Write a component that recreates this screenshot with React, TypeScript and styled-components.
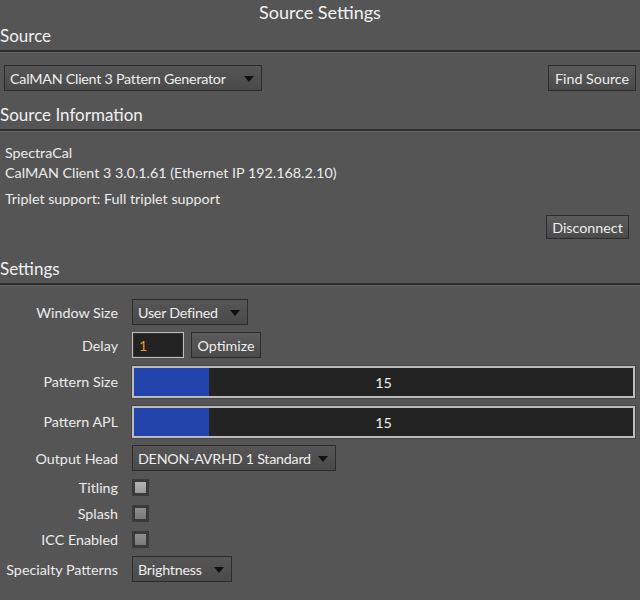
import React, { FC } from 'react';
import styled, { createGlobalStyle } from 'styled-components';

const GlobalStyle = createGlobalStyle`
  html, body {
    margin: 0;
    padding: 0;
    background: #555555;
  }
  body {
    font-family: Lato, "Open Sans", sans-serif;
    color: #ececec;
  }
`;

const Page = styled.div`
  width: 640px;
  height: 600px;
  background: #555555;
  overflow: hidden;
  font-size: 14.3px;
`;

const Title = styled.div`
  height: 24px;
  padding-bottom: 2px;
  line-height: 24px;
  text-align: center;
  font-size: 18px;
  color: #f2f2f2;
`;

const SectionHeader = styled.div<{ top?: number }>`
  margin-top: ${(p) => p.top ?? 0}px;
  height: 20px;
  line-height: 20px;
  padding-bottom: 4px;
  font-size: 17px;
  color: #f0f0f0;
  border-bottom: 2px solid #2e2e2e;
  box-shadow: 0 1px 0 #646464;
`;

const SourceRow = styled.div`
  display: flex;
  justify-content: space-between;
  align-items: center;
  padding: 0 4px;
  margin-top: 13px;
`;

const SelectBox = styled.div<{ w: number }>`
  position: relative;
  box-sizing: border-box;
  width: ${(p) => p.w}px;
  height: 26px;
  padding: 0 22px 0 5px;
  display: flex;
  align-items: center;
  background: linear-gradient(#565656, #4a4a4a);
  border: 1px solid #2c2c2c;
  color: #eeeeee;
  white-space: nowrap;
  letter-spacing: -0.25px;

  &::after {
    content: '';
    position: absolute;
    right: 7px;
    top: 10px;
    border-left: 5px solid transparent;
    border-right: 5px solid transparent;
    border-top: 6px solid #111;
  }
`;

const Button = styled.div<{ w: number; h?: number }>`
  box-sizing: border-box;
  width: ${(p) => p.w}px;
  height: ${(p) => p.h ?? 26}px;
  display: flex;
  align-items: center;
  justify-content: center;
  background: linear-gradient(#5c5c5c, #4a4a4a);
  border: 1px solid #2c2c2c;
  color: #eeeeee;
`;

const InfoBlock = styled.div`
  padding: 12px 5px 0;
  line-height: 20px;
`;

const InfoLine = styled.div<{ gap?: number }>`
  margin-top: ${(p) => p.gap ?? 0}px;
`;

const RightRow = styled.div`
  display: flex;
  justify-content: flex-end;
  padding-right: 11px;
  margin-top: 6px;
`;

const SettingsGrid = styled.div`
  display: grid;
  grid-template-columns: 114px 1fr;
  column-gap: 14px;
  row-gap: 7px;
  padding: 14px 5px 0 4px;
  align-items: center;
`;

const Label = styled.div`
  text-align: right;
  white-space: nowrap;
`;

const Controls = styled.div`
  display: flex;
  align-items: center;
  gap: 7px;
`;

const NumberInput = styled.div`
  box-sizing: border-box;
  width: 52px;
  height: 26px;
  padding-left: 6px;
  display: flex;
  align-items: center;
  background: #222222;
  border: 1px solid #bdbdbd;
  box-shadow: inset 0 0 0 1px #333;
  color: #e8962c;
`;

const Bar = styled.div`
  position: relative;
  box-sizing: border-box;
  height: 32px;
  margin-top: 1px;
  background: #232323;
  border: 2px solid #bcbcbc;
  box-shadow: 0 0 0 1px #444;
  display: flex;
  align-items: center;
  justify-content: center;
  color: #f0f0f0;
`;

const BarFill = styled.div`
  position: absolute;
  left: 0;
  top: 0;
  bottom: 0;
  background: #2344ac;
`;

const BarValue = styled.span`
  position: relative;
`;

const CheckRow = styled.div`
  height: 19px;
  display: flex;
  align-items: center;
`;

const Check = styled.div<{ hover?: boolean }>`
  box-sizing: border-box;
  width: 17px;
  height: 17px;
  border: 3px solid #3a3a3a;
  background: ${(p) =>
    p.hover ? 'linear-gradient(#b4b4b4, #9a9a9a)' : 'linear-gradient(#8e8e8e, #7a7a7a)'};
`;

const Slider: FC<{ value: number; max: number }> = ({ value, max }) => (
  <Bar>
    <BarFill style={{ width: `${(value / max) * 100}%` }} />
    <BarValue>{value}</BarValue>
  </Bar>
);

const App: FC = () => (
  <Page>
    <GlobalStyle />
    <Title>Source Settings</Title>

    <SectionHeader>Source</SectionHeader>
    <SourceRow>
      <SelectBox w={258}>CalMAN Client 3 Pattern Generator</SelectBox>
      <Button w={88}>Find Source</Button>
    </SourceRow>

    <SectionHeader top={14}>Source Information</SectionHeader>
    <InfoBlock>
      <InfoLine>SpectraCal</InfoLine>
      <InfoLine>CalMAN Client 3 3.0.1.61 (Ethernet IP 192.168.2.10)</InfoLine>
      <InfoLine gap={6}>Triplet support: Full triplet support</InfoLine>
    </InfoBlock>
    <RightRow>
      <Button w={83} h={24}>
        Disconnect
      </Button>
    </RightRow>

    <SectionHeader top={20}>Settings</SectionHeader>
    <SettingsGrid>
      <Label>Window Size</Label>
      <Controls>
        <SelectBox w={116}>User Defined</SelectBox>
      </Controls>

      <Label>Delay</Label>
      <Controls>
        <NumberInput>1</NumberInput>
        <Button w={70}>Optimize</Button>
      </Controls>

      <Label>Pattern Size</Label>
      <Slider value={15} max={100} />

      <Label>Pattern APL</Label>
      <Slider value={15} max={100} />

      <Label>Output Head</Label>
      <Controls>
        <SelectBox w={204}>DENON-AVRHD 1 Standard</SelectBox>
      </Controls>

      <Label>Titling</Label>
      <CheckRow>
        <Check hover />
      </CheckRow>

      <Label>Splash</Label>
      <CheckRow>
        <Check />
      </CheckRow>

      <Label>ICC Enabled</Label>
      <CheckRow>
        <Check />
      </CheckRow>

      <Label>Specialty Patterns</Label>
      <Controls>
        <SelectBox w={100}>Brightness</SelectBox>
      </Controls>
    </SettingsGrid>
  </Page>
);

export default App;
